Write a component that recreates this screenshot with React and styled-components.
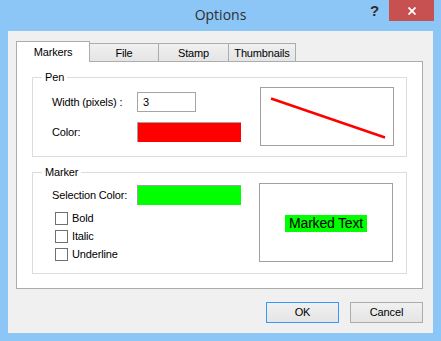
import React from "react";
import styled, { createGlobalStyle } from "styled-components";

const Global = createGlobalStyle`
  html, body { margin: 0; padding: 0; }
  body {
    width: 441px; height: 341px; overflow: hidden;
    background: #8cc6f7;
    font-family: "Liberation Sans", Arial, sans-serif;
    font-size: 11px; color: #000;
    letter-spacing: -0.15px;
  }
`;

const Frame = styled.div`
  width: 441px; height: 341px;
  display: flex; flex-direction: column;
  background: #8cc6f7;
  box-sizing: border-box;
`;

const TitleBar = styled.div`
  height: 31px;
  display: grid;
  grid-template-columns: 1fr auto 1fr;
  align-items: center;
`;

const Title = styled.div`
  grid-column: 2;
  font-family: "Open Sans", "Liberation Sans", sans-serif;
  font-size: 14px;
  letter-spacing: 0;
  color: #2e2e2e;
  line-height: 20px;
  margin-top: -1px;
`;

const Controls = styled.div`
  grid-column: 3;
  justify-self: end;
  align-self: start;
  display: flex;
  margin-right: 7px;
`;

const CaptionButton = styled.div`
  height: 21px;
  width: ${p => p.$w}px;
  display: flex; align-items: center; justify-content: center;
  background: ${p => p.$bg || "transparent"};
  color: #2e2e2e;
  font-weight: bold;
  font-size: 15px;
  font-family: "Liberation Sans", Arial, sans-serif;
`;

const Client = styled.div`
  margin: 0 8px 8px 8px;
  height: 302px;
  box-sizing: border-box;
  background: #f0f0f0;
  padding: 10px 10px 10px 8px;
  display: flex; flex-direction: column;
`;

const TabStrip = styled.div`
  display: flex;
  align-items: flex-end;
  height: 21px;
  margin-bottom: -1px;
`;

const Tab = styled.div`
  position: relative;
  box-sizing: border-box;
  width: ${p => p.$w}px;
  height: ${p => (p.$active ? 21 : 18)}px;
  margin-bottom: ${p => (p.$active ? 0 : 1)}px;
  margin-left: ${p => (p.$first ? 0 : -1)}px;
  border: 1px solid #acacac;
  border-bottom: none;
  background: ${p => (p.$active ? "#ffffff" : "linear-gradient(#f0f0f0, #e5e5e5)")};
  z-index: ${p => (p.$active ? 2 : 0)};
  display: flex; align-items: center; justify-content: center;
  padding-top: ${p => (p.$active ? 0 : 1)}px;
  line-height: 13px;
`;

const Panel = styled.div`
  position: relative;
  z-index: 1;
  box-sizing: border-box;
  width: 407px;
  height: 228px;
  border: 1px solid #acacac;
  background: #fff;
  padding: 15px 15px 0 15px;
  display: flex; flex-direction: column;
  gap: 15px;
`;

const Group = styled.div`
  position: relative;
  box-sizing: border-box;
  height: ${p => p.$h}px;
  border: 1px solid #dcdcdc;
  padding: ${p => p.$pt}px ${p => p.$pr}px 0 19px;
  display: flex;
  justify-content: space-between;
  align-items: flex-start;
`;

const Legend = styled.span`
  position: absolute;
  top: -7px; left: 9px;
  padding: 0 3px;
  background: #fff;
  line-height: 13px;
`;

const Fields = styled.div`
  display: flex; flex-direction: column;
  margin-top: ${p => p.$mt}px;
  gap: ${p => p.$gap}px;
`;

const Row = styled.div`
  display: flex; align-items: center;
  height: 20px;
`;

const Label = styled.span`
  width: 85px;
  line-height: 13px;
  white-space: nowrap;
`;

const NumberInput = styled.div`
  box-sizing: border-box;
  width: 59px; height: 20px;
  border: 1px solid #a5a5a5;
  padding-left: 5px;
  display: flex; align-items: center;
`;

const Swatch = styled.div`
  box-sizing: border-box;
  width: 104px; height: 20px;
  background: ${p => p.$color};
  border-top: 1px solid #a0a0a0;
  border-left: 1px solid #a0a0a0;
`;

const Preview = styled.div`
  box-sizing: border-box;
  width: 134px; height: ${p => p.$h}px;
  border: 1px solid #a0a0a0;
  background: #fff;
  display: flex; align-items: center; justify-content: center;
`;

const Checks = styled.div`
  display: flex; flex-direction: column;
  gap: 5px;
  margin-top: 7px;
  margin-left: 3px;
`;

const CheckRow = styled.label`
  display: flex; align-items: center;
  height: 13px;
  gap: 4px;
  line-height: 13px;
`;

const Box = styled.span`
  box-sizing: border-box;
  width: 13px; height: 13px;
  border: 1px solid #707070;
  background: #fff;
`;

const Marked = styled.span`
  background: #00ff00;
  font-size: 14px;
  letter-spacing: -0.2px;
  line-height: 17px;
  padding: 0 4px 0 4px;
  margin-top: 2px;
`;

const Buttons = styled.div`
  display: flex; justify-content: flex-end;
  gap: 11px;
  margin-top: 13px;
`;

const Button = styled.div`
  box-sizing: border-box;
  width: 73px; height: 21px;
  border: 1px solid ${p => (p.$focus ? "#3399ff" : "#acacac")};
  background: linear-gradient(#f0f0f0, #e5e5e5);
  display: flex; align-items: center; justify-content: center;
  line-height: 13px;
`;

const tabs = [
  { name: "Markers", w: 74, active: true },
  { name: "File", w: 70 },
  { name: "Stamp", w: 71 },
  { name: "Thumbnails", w: 68 },
];

export default function App() {
  return (
    <>
      <Global />
      <Frame>
        <TitleBar>
          <Title>Options</Title>
          <Controls>
            <CaptionButton $w={29}>?</CaptionButton>
            <CaptionButton $w={45} $bg="#c75050">
              <svg width="8" height="8" viewBox="0 0 8 8">
                <path d="M0.5 0.5 L7.5 7.5 M7.5 0.5 L0.5 7.5" stroke="#fff" strokeWidth="1.8" />
              </svg>
            </CaptionButton>
          </Controls>
        </TitleBar>
        <Client>
          <TabStrip>
            {tabs.map((t, i) => (
              <Tab key={t.name} $w={t.w} $active={t.active} $first={i === 0}>
                {t.name}
              </Tab>
            ))}
          </TabStrip>
          <Panel>
            <Group $h={80} $pt={9} $pr={12}>
              <Legend>Pen</Legend>
              <Fields $mt={5} $gap={10}>
                <Row>
                  <Label>Width (pixels) :</Label>
                  <NumberInput>3</NumberInput>
                </Row>
                <Row>
                  <Label>Color:</Label>
                  <Swatch $color="#ff0000" />
                </Row>
              </Fields>
              <Preview $h={59}>
                <svg width="132" height="57" viewBox="0 0 132 57">
                  <line x1="10" y1="10.5" x2="124" y2="49.5" stroke="#ff0000" strokeWidth="2.6" />
                </svg>
              </Preview>
            </Group>
            <Group $h={102} $pt={10} $pr={13}>
              <Legend>Marker</Legend>
              <Fields $mt={2} $gap={0}>
                <Row>
                  <Label>Selection Color:</Label>
                  <Swatch $color="#00ff00" />
                </Row>
                <Checks>
                  <CheckRow><Box />Bold</CheckRow>
                  <CheckRow><Box />Italic</CheckRow>
                  <CheckRow><Box />Underline</CheckRow>
                </Checks>
              </Fields>
              <Preview $h={79}>
                <Marked>Marked Text</Marked>
              </Preview>
            </Group>
          </Panel>
          <Buttons>
            <Button $focus>OK</Button>
            <Button>Cancel</Button>
          </Buttons>
        </Client>
      </Frame>
    </>
  );
}
